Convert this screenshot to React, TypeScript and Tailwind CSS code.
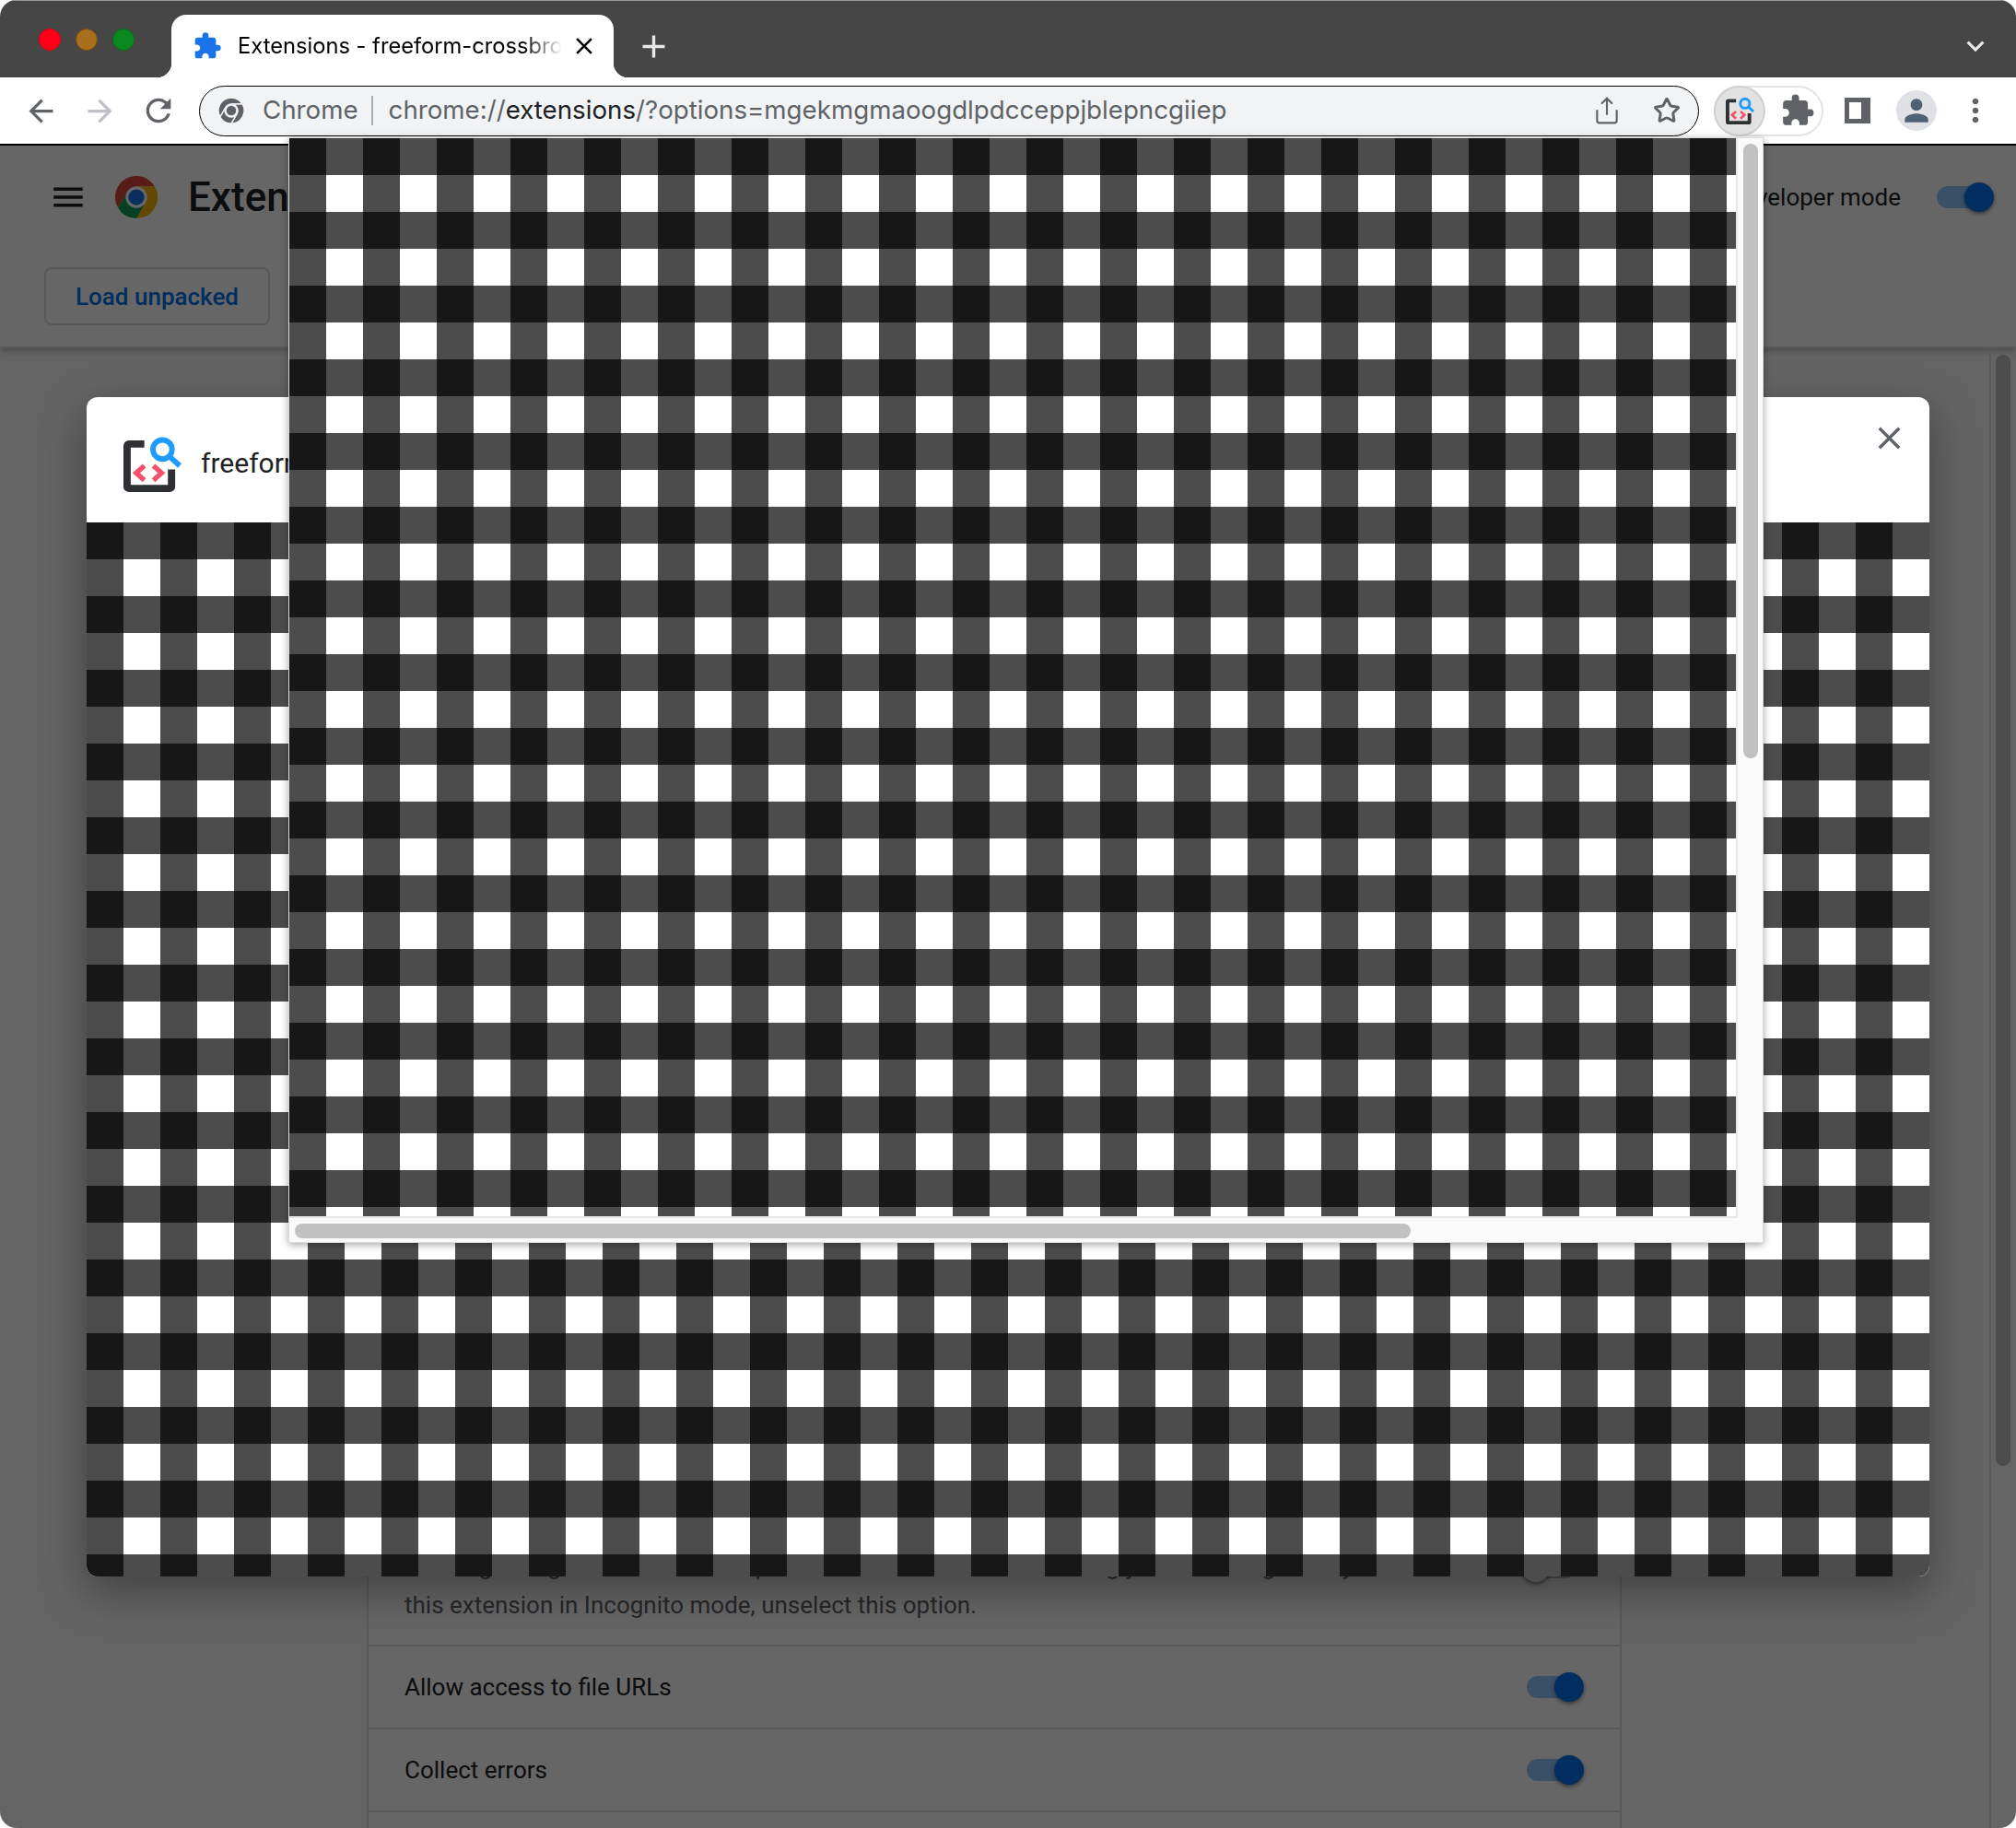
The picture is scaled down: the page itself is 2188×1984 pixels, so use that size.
import React from 'react';
import { Share, Star } from 'lucide-react';
import {
  MdAdd,
  MdArrowBack,
  MdArrowForward,
  MdClose,
  MdExtension,
  MdKeyboardArrowDown,
  MdMenu,
  MdMoreVert,
  MdPerson,
  MdRefresh,
} from 'react-icons/md';

const CHECKS =
  'bg-white bg-[linear-gradient(90deg,rgba(0,0,0,.7)_50%,transparent_50%),linear-gradient(rgba(0,0,0,.7)_50%,transparent_50%)] bg-[length:80px_80px]';

const ChromeLogo: React.FC<{ size: number; mono?: boolean }> = ({ size, mono }) => {
  // the grey omnibox variant has thin gaps between its three sectors
  const gap = mono ? { stroke: '#f1f3f4', strokeWidth: 2.5 } : {};
  return (
    <svg width={size} height={size} viewBox="0 0 48 48" className="shrink-0">
      <path d="M3.2 36A24 24 0 0 1 44.8 12H24A12 12 0 0 0 13.6 18Z" fill={mono ? '#5f6368' : '#db4437'} {...gap} />
      <path d="M44.8 12A24 24 0 0 1 24 48L34.4 30A12 12 0 0 0 24 12Z" fill={mono ? '#5f6368' : '#f4b400'} {...gap} />
      <path d="M24 48A24 24 0 0 1 3.2 36L13.6 18A12 12 0 0 0 34.4 30Z" fill={mono ? '#5f6368' : '#0f9d58'} {...gap} />
      <circle cx="24" cy="24" r="12" fill={mono ? '#f1f3f4' : '#fff'} />
      <circle cx="24" cy="24" r="9" fill={mono ? '#5f6368' : '#1a73e8'} />
    </svg>
  );
};

// the extension's own icon: bracket frame, red code marks, blue magnifier
const ExtensionIcon: React.FC<{ size: number }> = ({ size }) => (
  <svg width={size} height={size} viewBox="0 0 64 62" className="shrink-0">
    <path d="M23 8H6a2 2 0 0 0-2 2v45a2 2 0 0 0 2 2h45a2 2 0 0 0 2-2V36" fill="none" stroke="#2f3033" strokeWidth="8" />
    <path d="M23 32l-9 8 9 8" fill="none" stroke="#f4516c" strokeWidth="5.5" />
    <path d="M33 32l9 8-9 8" fill="none" stroke="#f4516c" strokeWidth="5.5" />
    <circle cx="43" cy="14" r="10.5" fill="none" stroke="#1e9bff" strokeWidth="6" />
    <path d="M51 22l11 10" fill="none" stroke="#1e9bff" strokeWidth="6" />
  </svg>
);

const Toggle: React.FC<{ off?: boolean }> = ({ off }) => (
  <div className="relative h-6 w-[62px] shrink-0">
    {off ? (
      <>
        <div className="h-6 w-[54px] rounded-full bg-[#bdc1c6]" />
        <div className="absolute -left-1.5 -top-1 h-8 w-8 rounded-full bg-white shadow-[0_2px_4px_rgba(0,0,0,0.5)]" />
      </>
    ) : (
      <>
        <div className="h-6 w-[54px] rounded-full bg-[#91c8ff]" />
        <div className="absolute -top-1 right-0 h-8 w-8 rounded-full bg-[#0073f0] shadow-[0_2px_4px_rgba(0,0,0,0.5)]" />
      </>
    )}
  </div>
);

const ToolSlot: React.FC<{ children: React.ReactNode }> = ({ children }) => (
  <div className="flex w-16 shrink-0 items-center justify-center">{children}</div>
);

const TabBar: React.FC = () => (
  <div className="flex h-[84px] shrink-0 items-start border-t border-[#9a9a9a] bg-[#464646]">
    <div className="ml-[42px] mt-[30px] flex gap-4">
      <div className="h-6 w-6 rounded-full border border-[#e0000f] bg-[#ff0018]" />
      <div className="h-6 w-6 rounded-full border border-[#7c4b14] bg-[#a86f1c]" />
      <div className="h-6 w-6 rounded-full border border-[#0b6a18] bg-[#088a1f]" />
    </div>
    <div className="relative ml-10 mt-[15px] flex h-[68px] w-[480px] items-center rounded-t-2xl bg-white pl-[23px]">
      <div className="absolute bottom-0 -left-4 h-4 w-4 bg-[radial-gradient(circle_at_0_0,transparent_16px,white_16.5px)]" />
      <div className="absolute bottom-0 -right-4 h-4 w-4 bg-[radial-gradient(circle_at_100%_0,transparent_16px,white_16.5px)]" />
      <MdExtension size={32} className="shrink-0 text-[#1a73e8]" />
      <div className="ml-[17px] w-[352px] overflow-hidden whitespace-nowrap font-['Inter',sans-serif] text-[23.7px] text-black [mask-image:linear-gradient(90deg,#000_88%,transparent)]">
        Extensions - freeform-crossbro
      </div>
      <MdClose size={30} className="ml-[9px] shrink-0 text-black" />
    </div>
    <MdAdd size={41} className="ml-[23px] mt-[29px] shrink-0 text-[#e8e8e8]" />
    <MdKeyboardArrowDown size={38} className="ml-auto mr-[25px] mt-[30px] shrink-0 text-[#e8e8e8]" />
  </div>
);

const Toolbar: React.FC = () => (
  <div className="flex h-[72px] shrink-0 items-center bg-white pl-3">
    <ToolSlot>
      <MdArrowBack size={39} className="text-[#5f6368]" />
    </ToolSlot>
    <ToolSlot>
      <MdArrowForward size={39} className="text-[#bdc1c6]" />
    </ToolSlot>
    <ToolSlot>
      <MdRefresh size={40} className="text-[#5f6368]" />
    </ToolSlot>
    <div className="ml-3 flex h-[55px] w-[1628px] shrink-0 items-center rounded-full border border-black bg-[#f1f3f4] pl-5 pr-[19px] font-['Inter',sans-serif] text-[27.7px] text-[#5f6368]">
      <ChromeLogo size={28} mono />
      <span className="ml-5">Chrome</span>
      <div className="ml-3.5 h-8 w-0.5 bg-[#a9acb0]" />
      <div className="ml-[17px] whitespace-nowrap">
        chrome://<span className="text-[#202124]">extensions</span>/?options=mgekmgmaoogdlpdcceppjblepncgiiep
      </div>
      <Share size={32} strokeWidth={1.6} className="ml-auto shrink-0" />
      <Star size={30} strokeWidth={2.4} className="ml-[34px] shrink-0" />
    </div>
    <div className="ml-4 flex h-[55px] w-[119px] shrink-0 items-center rounded-full border-2 border-[#e4e4e4]">
      <div className="-ml-0.5 flex h-[55px] w-[56px] items-center justify-center rounded-full border-2 border-[#d0d0d0] bg-[#e2e2e2]">
        <ExtensionIcon size={31} />
      </div>
      <MdExtension size={38} className="ml-4 text-[#5f6368]" />
    </div>
    <div className="ml-[5px] flex">
      <ToolSlot>
        <div className="h-7 w-7 border-[5px] border-r-[10px] border-[#5f6368] bg-white" />
      </ToolSlot>
      <ToolSlot>
        <div className="flex h-11 w-11 items-center justify-center rounded-full bg-[#dee1e6]">
          <MdPerson size={38} className="text-[#4f6175]" />
        </div>
      </ToolSlot>
      <ToolSlot>
        <MdMoreVert size={40} className="text-[#5f6368]" />
      </ToolSlot>
    </div>
  </div>
);

const ExtensionsPage: React.FC = () => (
  <div className="relative flex min-h-0 flex-1 flex-col bg-[#fbfbfb] font-['Roboto',sans-serif]">
    <header className="h-[220px] shrink-0 border-b-2 border-[#e0e0e0] bg-white shadow-[0_4px_6px_rgba(0,0,0,0.2)]">
      <div className="flex h-[112px] items-center pl-[53px] pr-6">
        <MdMenu size={42} className="shrink-0 text-[#202124]" />
        <div className="ml-[30px]">
          <ChromeLogo size={46} />
        </div>
        <h1 className="ml-[33px] text-[44px] font-medium text-[#202124]">Extensions</h1>
        <span className="ml-auto text-[26px] text-[#202124]">Developer mode</span>
        <div className="ml-[39px]">
          <Toggle />
        </div>
      </div>
      <div className="mt-5 pl-12">
        <button className="flex h-[63px] w-[245px] items-center justify-center rounded-lg border-2 border-[#dadce0] pt-0.5 text-[26px] font-medium text-[#0073f0]">
          Load unpacked
        </button>
      </div>
    </header>
    <div className="flex min-h-0 flex-1">
      <section className="ml-[398px] flex w-[1362px] shrink-0 flex-col border-x-2 border-[#dcdcdc] bg-white">
        <div className="flex-1" />
        <div className="flex h-[126px] shrink-0 justify-between border-b-2 border-[#e0e0e0] pl-[39px] pr-[39px] text-[26px] leading-[42px] text-[#5f6368]">
          <p className="mt-[18px]">
            Warning: Google Chrome cannot prevent extensions from recording your browsing history. To disable
            <br />
            this extension in Incognito mode, unselect this option.
          </p>
          <div className="mt-7">
            <Toggle off />
          </div>
        </div>
        <div className="flex h-[90px] shrink-0 items-center justify-between border-b-2 border-[#e0e0e0] pl-[39px] pr-[39px] text-[26px] text-[#202124]">
          Allow access to file URLs
          <Toggle />
        </div>
        <div className="flex h-[90px] shrink-0 items-center justify-between border-b-2 border-[#e0e0e0] pl-[39px] pr-[39px] text-[26px] text-[#202124]">
          Collect errors
          <Toggle />
        </div>
        <div className="h-[17px] shrink-0" />
      </section>
      <div className="ml-auto w-[29px] shrink-0 border-l-2 border-[#e0e0e0] pl-[5px] pt-[7px]">
        <div className="h-[1206px] w-4 rounded-full bg-[#c1c1c1]" />
      </div>
    </div>
    {/* dimmed backdrop of the dialog */}
    <div className="absolute inset-0 bg-black/60" />
  </div>
);

const Dialog: React.FC = () => (
  <div className="absolute left-[94px] top-[431px] flex h-[1280px] w-[2000px] flex-col overflow-hidden rounded-xl bg-white font-['Roboto',sans-serif] shadow-[0_16px_48px_rgba(0,0,0,0.35)]">
    <div className="flex h-[136px] shrink-0 items-center pl-10 pr-[23px]">
      <div className="mt-[11px]">
        <ExtensionIcon size={63} />
      </div>
      <span className="ml-[21px] mt-[6px] text-[30px] text-[#202124]">freeform-crossbrowser-testing</span>
      <MdClose size={41} className="ml-auto mt-[-47px] shrink-0 text-[#5f6368]" />
    </div>
    <div className={`flex-1 ${CHECKS}`} />
  </div>
);

const Popup: React.FC = () => (
  <div className="absolute left-[313px] top-[149px] flex h-[1200px] w-[1601px] flex-col border border-[#dcdcdc] bg-[#fafafa] shadow-[0_2px_8px_rgba(0,0,0,0.35)]">
    <div className="flex h-[1172px] shrink-0">
      <div className={`w-[1572px] shrink-0 border-b-2 border-r-2 border-[#e8e8e8] ${CHECKS}`} />
      <div className="pl-1.5 pt-1.5">
        <div className="h-[667px] w-4 rounded-full bg-[#c1c1c1]" />
      </div>
    </div>
    <div className="pl-1.5 pt-1.5">
      <div className="h-4 w-[1211px] rounded-full bg-[#c1c1c1]" />
    </div>
  </div>
);

const App: React.FC = () => {
  return (
    <div className="relative h-[1984px] w-[2188px] overflow-hidden bg-white">
      <div className="flex h-full flex-col overflow-hidden rounded-[18px]">
        <TabBar />
        <Toolbar />
        <div className="h-0.5 shrink-0 bg-black" />
        <ExtensionsPage />
      </div>
      <Dialog />
      <Popup />
    </div>
  );
};

export default App;
